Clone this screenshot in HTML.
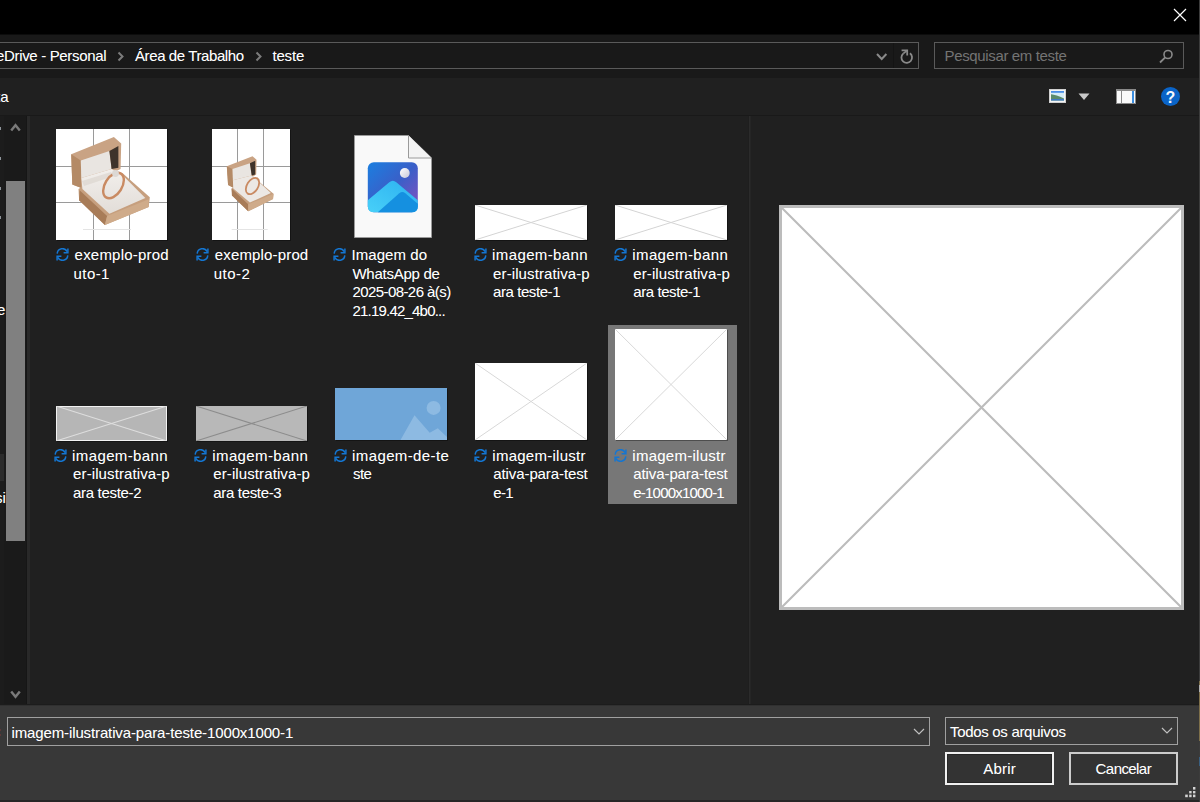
<!DOCTYPE html>
<html><head><meta charset="utf-8">
<style>
*{margin:0;padding:0;box-sizing:border-box}
html,body{width:1200px;height:802px;overflow:hidden;background:#202020}
body{position:relative;font-family:"Liberation Sans",sans-serif;font-size:15px;color:#fff}
.a{position:absolute}
.sh{box-shadow:1px 1px 0 rgba(0,0,0,0.35)}
.t{position:absolute;white-space:nowrap;line-height:20px;text-shadow:0 0 0.4px rgba(255,255,255,0.3)}
</style></head><body>
<div class="a" style="left:0;top:0;width:1200px;height:34px;background:#000"></div>
<div class="a" style="left:0;top:34px;width:1200px;height:1px;background:#0c0c0c"></div>
<svg class="a" style="left:1172px;top:7px" width="16" height="16" viewBox="0 0 16 16"><path d="M2 2L14 14M14 2L2 14" stroke="#fff" stroke-width="1.2"/></svg>
<div class="a" style="left:0;top:35px;width:1200px;height:43px;background:#191919"></div>
<div class="a" style="left:-10px;top:42px;width:929px;height:27px;border:1px solid #5a5a5a"></div>
<div class="t" style="left:-4.00px;top:46px">e</div>
<div class="t" style="left:4.00px;top:46px;letter-spacing:-0.333px">Drive - Personal</div>
<div class="t" style="left:135.00px;top:46px;letter-spacing:-0.400px">Área de Trabalho</div>
<div class="t" style="left:272.50px;top:46px;letter-spacing:-0.200px">teste</div>
<svg class="a" style="left:116px;top:50px" width="10" height="12" viewBox="0 0 10 12"><path d="M2.5 2.5L6.5 6.5L2.5 10.5" stroke="#7c7c7c" stroke-width="2" fill="none"/></svg>
<svg class="a" style="left:254px;top:50px" width="10" height="12" viewBox="0 0 10 12"><path d="M2.5 2.5L6.5 6.5L2.5 10.5" stroke="#7c7c7c" stroke-width="2" fill="none"/></svg>
<svg class="a" style="left:875px;top:51px" width="14" height="12" viewBox="0 0 14 12"><path d="M2 3L6.7 8L11.4 3" stroke="#8a8a8a" stroke-width="2" fill="none"/></svg>
<div class="a" style="left:893px;top:43px;width:1px;height:25px;background:#141414"></div>
<svg class="a" style="left:896px;top:46px" width="20" height="20" viewBox="0 0 20 20"><g stroke="#8a8a8a" stroke-width="1.8" fill="none"><path d="M7.2 7.6A5.3 5.3 0 1 0 13.9 7.3"/><path d="M7.2 7.6L11.2 4.4"/><path d="M5.6 4.4H11.2V9.4"/></g></svg>
<div class="a" style="left:934px;top:42px;width:250px;height:27px;border:1px solid #5a5a5a"></div>
<div class="t" style="left:944.50px;top:46px;letter-spacing:-0.353px;color:#747474;text-shadow:none">Pesquisar em teste</div>
<svg class="a" style="left:1157px;top:48px" width="18" height="18" viewBox="0 0 18 18"><circle cx="11" cy="6.5" r="4" stroke="#8a8a8a" stroke-width="1.6" fill="none"/><path d="M8.2 9.3L3 14.5" stroke="#8a8a8a" stroke-width="1.8"/></svg>
<div class="a" style="left:0;top:78px;width:1200px;height:37px;background:#202020"></div>
<div class="a" style="left:0;top:115px;width:1200px;height:1px;background:#191919"></div>
<div class="t" style="left:-4.00px;top:87px">ta</div>
<svg class="a" style="left:1049px;top:89px" width="17" height="14" viewBox="0 0 17 14"><rect x="0.5" y="0.5" width="16" height="13" fill="#f4f4f4" stroke="#d0d0d0"/><rect x="2" y="2" width="13" height="9.5" fill="#d4ecf8"/><rect x="2" y="2" width="13" height="1.8" fill="#4a8ee6"/><path d="M2 5.2Q7 5.6 15 9.6V11.5H2Z" fill="#5a8a6c"/><path d="M2 10H15V11.5H2Z" fill="#3f78c4"/></svg>
<svg class="a" style="left:1078px;top:93px" width="12" height="8" viewBox="0 0 12 8"><path d="M0.5 0.5H11.5L6 7Z" fill="#c8c8c8"/></svg>
<div class="a" style="left:1116px;top:89px;width:20px;height:15px;background:#fafafa;border:1px solid #8a8a8a;border-top:2px solid #8a8a8a"></div>
<div class="a" style="left:1121px;top:91px;width:1px;height:12px;background:#8a8a8a"></div>
<div class="a" style="left:1132px;top:91px;width:2px;height:12px;background:#3b8ee0"></div>
<div class="a" style="left:1161px;top:87px;width:19px;height:19px;border-radius:50%;background:#0a64c8"></div>
<div class="a" style="left:1161px;top:88px;width:19px;height:19px;text-align:center;font-weight:bold;font-size:16px;line-height:19px;color:#f4f8fc">?</div>
<div class="a" style="left:0;top:116px;width:26px;height:589px;background:#1a1a1a"></div>
<div class="a" style="left:0;top:116px;width:4px;height:589px;background:#1c1c1c"></div>
<div class="a" style="left:26px;top:116px;width:1px;height:589px;background:#161616"></div>
<div class="a" style="left:27px;top:116px;width:3px;height:589px;background:#292929"></div>
<div class="a" style="left:0;top:127px;width:1px;height:3px;background:#8e949a"></div>
<div class="a" style="left:0;top:157px;width:1px;height:3px;background:#8e949a"></div>
<div class="a" style="left:0;top:187px;width:1px;height:3px;background:#8e949a"></div>
<div class="a" style="left:0;top:216px;width:1px;height:3px;background:#8e949a"></div>
<div class="a" style="left:0;top:454px;width:4px;height:27px;background:#2b2b2b"></div>
<div class="t" style="left:-3.00px;top:300px">e</div>
<div class="t" style="left:-5.00px;top:488px">si</div>
<div class="a" style="left:6px;top:181px;width:19px;height:360px;background:#808080"></div>
<svg class="a" style="left:10px;top:123px" width="11" height="9" viewBox="0 0 11 9"><path d="M1.2 7.6L5.5 2.2L9.8 7.6" stroke="#7a7a7a" stroke-width="2.4" fill="none"/></svg>
<svg class="a" style="left:10px;top:690px" width="11" height="9" viewBox="0 0 11 9"><path d="M1.2 1.4L5.5 6.8L9.8 1.4" stroke="#7a7a7a" stroke-width="2.4" fill="none"/></svg>
<div class="a" style="left:748px;top:116px;width:1px;height:589px;background:#1e1e1e"></div>
<div class="a" style="left:749px;top:116px;width:1px;height:589px;background:#2b2b2b"></div>
<div class="a" style="left:750px;top:116px;width:1px;height:589px;background:#252525"></div>
<!-- thumb 1 ring -->
<svg class="a sh" style="left:56px;top:129px" width="111" height="111" viewBox="0 0 111 111">
<defs>
<linearGradient id="tan1" x1="0" y1="0" x2="1" y2="1"><stop offset="0" stop-color="#d8b494"/><stop offset="1" stop-color="#b98e6a"/></linearGradient>
<linearGradient id="cush1" x1="0" y1="0" x2="0" y2="1"><stop offset="0" stop-color="#f2efec"/><stop offset="1" stop-color="#e2ddd8"/></linearGradient>
</defs>
<rect width="111" height="111" fill="#fff"/>
<path d="M37.5 0V111M73.5 0V111M0 37.5H111M0 73.5H111" stroke="#9a9a9a" stroke-width="1" fill="none"/>
<path d="M15.2 25.3L57.9 7.9L65.2 14.6L64.6 39.9L25.3 58.9L16.3 55.6Z" fill="#c9a384"/>
<path d="M15.2 25.3L24.8 31.5L25.3 58.9L16.3 55.6Z" fill="#b48a66"/>
<path d="M24.8 31.5L53.4 21.9L55.6 39.9L25.3 48.9Z" fill="#e9e5e1"/>
<path d="M53.4 21.9L62.4 16.9L62.4 38.7L55.6 39.9Z" fill="#3e332b"/>
<path d="M22.5 60.1L55.6 39.9L66.9 44.6L93.8 68.2L92.7 78L48.9 96L23.1 71.3Z" fill="#c69f7e"/>
<path d="M23.6 61.2L51.1 87L48.9 96L23.1 71.3Z" fill="#a87c58"/>
<path d="M51.1 87L92.7 70.2L92.7 78L48.9 96Z" fill="#cfab8a"/>
<path d="M25.3 48.9L55.6 39.9L66.9 46.6L89.3 69L53.4 84.8L26.4 60.1Z" fill="url(#cush1)"/>
<path d="M26 52L55 43L58 47L28 57Z" fill="#d8d2cc" opacity="0.6"/>
<ellipse cx="57.5" cy="56.5" rx="8.5" ry="14" transform="rotate(32 57.5 56.5)" fill="none" stroke="#c98a62" stroke-width="2.4"/>
<circle cx="59.5" cy="44.5" r="3.4" fill="#dcd8d4"/>
<path d="M27 100.5H75" stroke="#e4e4e4" stroke-width="1"/>
</svg>
<!-- thumb 2 ring -->
<svg class="a sh" style="left:212px;top:129px" width="78" height="111" viewBox="0.3 0 78 111">
<rect width="78.3" height="111" fill="#fff"/>
<path d="M25.8 0V111M51.8 0V111M0 37.5H78.3M0 73.5H78.3" stroke="#9a9a9a" stroke-width="1" fill="none"/>
<path d="M15.1 37.3L40.8 27.3L44.8 30.8L44.5 45.6L21.6 58.7L16.4 56.1Z" fill="#c9a384"/>
<path d="M15.1 37.3L20.8 40L21.6 58.7L16.4 56.1Z" fill="#b48a66"/>
<path d="M20.8 40L38.2 34.3L40 46.5L21.2 51.3Z" fill="#e9e5e1"/>
<path d="M38.2 34.3L43.5 31.7L43.5 45.6L40 46.5Z" fill="#3e332b"/>
<path d="M19.9 59.6L40 46.5L61.8 64.8L61.3 70.1L36.5 82.3L20.3 66.6Z" fill="#c69f7e"/>
<path d="M19.9 59.6L36.5 75.3L36.5 82.3L20.3 66.6Z" fill="#a87c58"/>
<path d="M36.5 75.3L61.8 64.8L61.3 70.1L36.5 82.3Z" fill="#cfab8a"/>
<path d="M21.2 51.3L40 46.5L59.2 64L38.2 73.6L21.6 59.6Z" fill="#ece8e4"/>
<ellipse cx="40.8" cy="57" rx="5.5" ry="9" transform="rotate(32 40.8 57)" fill="none" stroke="#c98a62" stroke-width="1.8"/>
<path d="M20 100.5H56" stroke="#e4e4e4" stroke-width="1"/>
</svg>
<!-- doc with photos icon -->
<svg class="a" style="left:354px;top:134.5px" width="78" height="103" viewBox="0 0 78 103">
<path d="M0.5 0.5H54.5L77.5 23V102.5H0.5Z" fill="#f9f9f9" stroke="#9a9a9a"/>
<path d="M54.5 0.5V23H77.5" fill="#f3f3f3" stroke="#9a9a9a"/>
<defs>
<linearGradient id="pg" x1="0" y1="0" x2="1" y2="1"><stop offset="0" stop-color="#1b7fe0"/><stop offset="0.5" stop-color="#3a5fc8"/><stop offset="1" stop-color="#8a4ec0"/></linearGradient>
<linearGradient id="mg" x1="0" y1="1" x2="1" y2="0"><stop offset="0" stop-color="#48d0f8"/><stop offset="1" stop-color="#2cb0f0"/></linearGradient>
<linearGradient id="cg" x1="0" y1="0" x2="1" y2="1"><stop offset="0" stop-color="#ffffff"/><stop offset="1" stop-color="#c8c8d8"/></linearGradient>
</defs>
<g transform="translate(13.8 27.3)">
<rect x="0" y="0" width="50" height="50" rx="6" fill="url(#pg)"/>
<circle cx="37" cy="10.7" r="4.9" fill="url(#cg)"/>
<path d="M0 38L21.5 20Q25 17 28.5 20L50 38V44Q50 50 44 50H6Q0 50 0 44Z" fill="url(#mg)"/>
<path d="M10 50L31.5 31Q34.5 28.5 37.5 31L50 41.5V44Q50 50 44 50Z" fill="#1590e0"/>
</g>
</svg>
<!-- banners row1 -->
<svg class="a sh" style="left:475px;top:205px" width="112" height="35" viewBox="0 0 112 35"><rect width="112" height="35" fill="#fff"/><path d="M0 0L112 35M112 0L0 35" stroke="#d4d4d4" stroke-width="1"/></svg>
<svg class="a sh" style="left:615px;top:205px" width="112" height="35" viewBox="0 0 112 35"><rect width="112" height="35" fill="#fff"/><path d="M0 0L112 35M112 0L0 35" stroke="#d4d4d4" stroke-width="1"/></svg>
<!-- row2 -->
<svg class="a sh" style="left:56px;top:406px" width="111" height="35" viewBox="0 0 111 35"><rect x="0.5" y="0.5" width="110" height="34" fill="#b6b6b6" stroke="#f2f2f2"/><path d="M0 0L111 35M111 0L0 35" stroke="#dedede" stroke-width="1.1"/></svg>
<svg class="a sh" style="left:196px;top:406px" width="111" height="35" viewBox="0 0 111 35"><rect width="111" height="35" fill="#b8b8b8"/><path d="M0 0L111 35M111 0L0 35" stroke="#8c8c8c" stroke-width="1.1"/></svg>
<svg class="a sh" style="left:335px;top:388px" width="112" height="52" viewBox="0 0 112 52"><rect width="112" height="52" fill="#6fa6d8"/><circle cx="98.6" cy="19.9" r="7" fill="#8dbae2"/><path d="M65.5 52L79.5 27.3L94.7 44.8L102.8 40.2L112 49V52Z" fill="#8dbae2"/></svg>
<svg class="a sh" style="left:475px;top:363px" width="112" height="77" viewBox="0 0 112 77"><rect width="112" height="77" fill="#fff"/><path d="M0 0L112 77M112 0L0 77" stroke="#d8d8d8" stroke-width="1"/></svg>
<div class="a" style="left:608px;top:325px;width:129px;height:179px;background:#777"></div>
<svg class="a sh" style="left:615px;top:329px" width="112" height="111" viewBox="0 0 112 111"><rect width="112" height="111" fill="#fff"/><path d="M0 0L112 111M112 0L0 111" stroke="#d8d8d8" stroke-width="1"/></svg>

<svg class="a" style="left:55.7px;top:248.0px" width="13" height="13" viewBox="0 0 13 13"><g stroke="#1476d2" stroke-width="1.5" fill="none"><path d="M1.2 5.6A5.3 5.3 0 0 1 11.2 3.6"/><path d="M11.9 0.4V4.7H7.6"/><path d="M11.8 7.4A5.3 5.3 0 0 1 1.8 9.4"/><path d="M1.1 12.6V8.3H5.4"/></g></svg>
<div class="t" style="left:74.60px;top:245px;letter-spacing:0.209px">exemplo-prod</div>
<div class="t" style="left:73.60px;top:264px;letter-spacing:0.400px">uto-1</div>
<svg class="a" style="left:195.8px;top:248.0px" width="13" height="13" viewBox="0 0 13 13"><g stroke="#1476d2" stroke-width="1.5" fill="none"><path d="M1.2 5.6A5.3 5.3 0 0 1 11.2 3.6"/><path d="M11.9 0.4V4.7H7.6"/><path d="M11.8 7.4A5.3 5.3 0 0 1 1.8 9.4"/><path d="M1.1 12.6V8.3H5.4"/></g></svg>
<div class="t" style="left:214.80px;top:245px;letter-spacing:0.155px">exemplo-prod</div>
<div class="t" style="left:213.80px;top:264px;letter-spacing:0.450px">uto-2</div>
<svg class="a" style="left:332.6px;top:248.0px" width="13" height="13" viewBox="0 0 13 13"><g stroke="#1476d2" stroke-width="1.5" fill="none"><path d="M1.2 5.6A5.3 5.3 0 0 1 11.2 3.6"/><path d="M11.9 0.4V4.7H7.6"/><path d="M11.8 7.4A5.3 5.3 0 0 1 1.8 9.4"/><path d="M1.1 12.6V8.3H5.4"/></g></svg>
<div class="t" style="left:351.40px;top:245px;letter-spacing:0.088px">Imagem do</div>
<div class="t" style="left:352.40px;top:264px;letter-spacing:-0.250px">WhatsApp de</div>
<div class="t" style="left:352.40px;top:282px;letter-spacing:-0.571px">2025-08-26 à(s)</div>
<div class="t" style="left:352.40px;top:301px;letter-spacing:-0.786px">21.19.42_4b0...</div>
<svg class="a" style="left:474px;top:248.0px" width="13" height="13" viewBox="0 0 13 13"><g stroke="#1476d2" stroke-width="1.5" fill="none"><path d="M1.2 5.6A5.3 5.3 0 0 1 11.2 3.6"/><path d="M11.9 0.4V4.7H7.6"/><path d="M11.8 7.4A5.3 5.3 0 0 1 1.8 9.4"/><path d="M1.1 12.6V8.3H5.4"/></g></svg>
<div class="t" style="left:492.10px;top:245px;letter-spacing:0.380px">imagem-bann</div>
<div class="t" style="left:493.10px;top:264px;letter-spacing:0.100px">er-ilustrativa-p</div>
<div class="t" style="left:493.10px;top:282px;letter-spacing:-0.430px">ara teste-1</div>
<svg class="a" style="left:614px;top:248.0px" width="13" height="13" viewBox="0 0 13 13"><g stroke="#1476d2" stroke-width="1.5" fill="none"><path d="M1.2 5.6A5.3 5.3 0 0 1 11.2 3.6"/><path d="M11.9 0.4V4.7H7.6"/><path d="M11.8 7.4A5.3 5.3 0 0 1 1.8 9.4"/><path d="M1.1 12.6V8.3H5.4"/></g></svg>
<div class="t" style="left:632.30px;top:245px;letter-spacing:0.380px">imagem-bann</div>
<div class="t" style="left:633.30px;top:264px;letter-spacing:0.100px">er-ilustrativa-p</div>
<div class="t" style="left:633.30px;top:282px;letter-spacing:-0.430px">ara teste-1</div>
<svg class="a" style="left:54px;top:448.7px" width="13" height="13" viewBox="0 0 13 13"><g stroke="#1476d2" stroke-width="1.5" fill="none"><path d="M1.2 5.6A5.3 5.3 0 0 1 11.2 3.6"/><path d="M11.9 0.4V4.7H7.6"/><path d="M11.8 7.4A5.3 5.3 0 0 1 1.8 9.4"/><path d="M1.1 12.6V8.3H5.4"/></g></svg>
<div class="t" style="left:72.10px;top:446px;letter-spacing:0.380px">imagem-bann</div>
<div class="t" style="left:73.10px;top:464px;letter-spacing:0.100px">er-ilustrativa-p</div>
<div class="t" style="left:73.10px;top:483px;letter-spacing:-0.330px">ara teste-2</div>
<svg class="a" style="left:194px;top:448.7px" width="13" height="13" viewBox="0 0 13 13"><g stroke="#1476d2" stroke-width="1.5" fill="none"><path d="M1.2 5.6A5.3 5.3 0 0 1 11.2 3.6"/><path d="M11.9 0.4V4.7H7.6"/><path d="M11.8 7.4A5.3 5.3 0 0 1 1.8 9.4"/><path d="M1.1 12.6V8.3H5.4"/></g></svg>
<div class="t" style="left:212.30px;top:446px;letter-spacing:0.380px">imagem-bann</div>
<div class="t" style="left:213.30px;top:464px;letter-spacing:0.100px">er-ilustrativa-p</div>
<div class="t" style="left:213.30px;top:483px;letter-spacing:-0.330px">ara teste-3</div>
<svg class="a" style="left:334px;top:448.7px" width="13" height="13" viewBox="0 0 13 13"><g stroke="#1476d2" stroke-width="1.5" fill="none"><path d="M1.2 5.6A5.3 5.3 0 0 1 11.2 3.6"/><path d="M11.9 0.4V4.7H7.6"/><path d="M11.8 7.4A5.3 5.3 0 0 1 1.8 9.4"/><path d="M1.1 12.6V8.3H5.4"/></g></svg>
<div class="t" style="left:352.10px;top:446px;letter-spacing:0.382px">imagem-de-te</div>
<div class="t" style="left:353.10px;top:464px;letter-spacing:-0.600px">ste</div>
<svg class="a" style="left:474px;top:448.7px" width="13" height="13" viewBox="0 0 13 13"><g stroke="#1476d2" stroke-width="1.5" fill="none"><path d="M1.2 5.6A5.3 5.3 0 0 1 11.2 3.6"/><path d="M11.9 0.4V4.7H7.6"/><path d="M11.8 7.4A5.3 5.3 0 0 1 1.8 9.4"/><path d="M1.1 12.6V8.3H5.4"/></g></svg>
<div class="t" style="left:492.30px;top:446px;letter-spacing:0.258px">imagem-ilustr</div>
<div class="t" style="left:493.30px;top:464px;letter-spacing:-0.100px">ativa-para-test</div>
<div class="t" style="left:493.30px;top:483px;letter-spacing:-0.700px">e-1</div>
<svg class="a" style="left:613.6px;top:448.7px" width="13" height="13" viewBox="0 0 13 13"><g stroke="#1476d2" stroke-width="1.5" fill="none"><path d="M1.2 5.6A5.3 5.3 0 0 1 11.2 3.6"/><path d="M11.9 0.4V4.7H7.6"/><path d="M11.8 7.4A5.3 5.3 0 0 1 1.8 9.4"/><path d="M1.1 12.6V8.3H5.4"/></g></svg>
<div class="t" style="left:632.30px;top:446px;letter-spacing:0.258px">imagem-ilustr</div>
<div class="t" style="left:633.30px;top:464px;letter-spacing:-0.100px">ativa-para-test</div>
<div class="t" style="left:633.30px;top:483px;letter-spacing:-0.792px">e-1000x1000-1</div>
<svg class="a" style="left:779px;top:205px" width="405" height="405" viewBox="0 0 405 405"><rect x="1.5" y="1.5" width="402" height="402" fill="#fff" stroke="#bcbcbc" stroke-width="3"/><path d="M3 3L402 402M402 3L3 402" stroke="#bcbcbc" stroke-width="2.1"/></svg>
<div class="a" style="left:0;top:705px;width:1200px;height:97px;background:#383838"></div>
<div class="a" style="left:0;top:704px;width:1200px;height:1px;background:#1c1c1c"></div>
<div class="a" style="left:0;top:705px;width:1200px;height:1px;background:#303030"></div>
<div class="a" style="left:0;top:800px;width:1200px;height:2px;background:#262626"></div>
<div class="a" style="left:7px;top:717px;width:923px;height:29px;border:1px solid #a0a0a0"></div>
<div class="a" style="left:0;top:729px;width:1px;height:2px;background:#5e3838"></div>
<div class="a" style="left:0;top:734px;width:1px;height:2px;background:#5e3838"></div>
<div class="t" style="left:11.50px;top:723px;letter-spacing:-0.125px">imagem-ilustrativa-para-teste-1000x1000-1</div>
<svg class="a" style="left:913px;top:728px" width="12" height="8" viewBox="0 0 12 8"><path d="M1 1L6 6L11 1" stroke="#c0c0c0" stroke-width="1.2" fill="none"/></svg>
<div class="a" style="left:945px;top:717px;width:233px;height:28px;border:1px solid #a0a0a0"></div>
<div class="t" style="left:950.00px;top:722px;letter-spacing:-0.312px">Todos os arquivos</div>
<svg class="a" style="left:1161px;top:727px" width="12" height="8" viewBox="0 0 12 8"><path d="M1 1L6 6L11 1" stroke="#c0c0c0" stroke-width="1.2" fill="none"/></svg>
<div class="a" style="left:945px;top:752px;width:109px;height:33px;border:2px solid #f0f0f0;background:#333"></div>
<div class="a" style="left:947px;top:754px;width:105px;height:29px;border:1px solid #262626"></div>
<div class="t" style="left:983.20px;top:759px;letter-spacing:0.250px">Abrir</div>
<div class="a" style="left:1069px;top:752px;width:109px;height:33px;border:2px solid #cccccc;background:#333"></div>
<div class="t" style="left:1095.60px;top:759px;letter-spacing:-0.571px">Cancelar</div>
<svg class="a" style="left:1184px;top:786px" width="12" height="12" viewBox="0 0 12 12"><g fill="#d4d4d4"><rect x="9" y="1" width="2.4" height="2.6"/><rect x="5.2" y="5" width="2.4" height="2.4"/><rect x="9" y="5" width="2.4" height="2.4"/><rect x="1.2" y="8.6" width="2.6" height="2.6"/><rect x="5.2" y="8.6" width="2.4" height="2.6"/><rect x="9" y="8.6" width="2.4" height="2.6"/></g></svg>
<div class="a" style="left:1199px;top:0;width:1px;height:802px;background:#3c3c3c"></div>
<div class="a" style="left:1199px;top:681px;width:1px;height:60px;background:#7d6f4a"></div>
<div class="a" style="left:1199px;top:685px;width:1px;height:7px;background:#b0b0b0"></div>
<div class="a" style="left:1199px;top:757px;width:1px;height:9px;background:#3a5f80"></div>
</body></html>
